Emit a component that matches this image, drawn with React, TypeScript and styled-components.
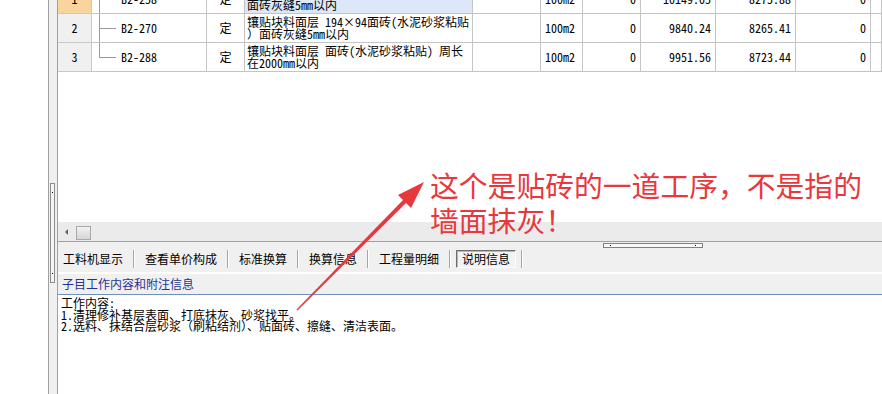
import React from "react";
import styled, { createGlobalStyle } from "styled-components";

const Global = createGlobalStyle`
  html, body { margin: 0; padding: 0; background: #fff; }
  body {
    font-family: "Noto Sans Mono CJK SC", "Noto Sans CJK SC", "Liberation Mono", monospace;
    font-size: 12px;
    color: #000;
  }
`;

const Screen = styled.div`
  position: relative;
  width: 882px;
  height: 394px;
  overflow: hidden;
  display: flex;
  background: #fff;
`;

const Gutter = styled.div`
  width: 48px;
  flex: none;
  background: #fff;
`;

const SideSplitter = styled.div`
  width: 10px;
  flex: none;
  box-sizing: border-box;
  border-left: 1px solid #a0a0a0;
  border-right: 1px solid #a0a0a0;
  background: #f0f0f0;
  padding: 183px 0 0 1px;
`;

const SideGrip = styled.div`
  width: 5px;
  height: 100px;
  box-sizing: border-box;
  border: 1px solid #8c8c8c;
  background: #f6f6f6;
  display: flex;
  flex-direction: column;
  justify-content: space-between;
  align-items: center;
  padding: 8px 0;
`;

const Dot = styled.span`
  width: 1px;
  height: 1px;
  background: #000;
`;

const Main = styled.div`
  flex: 1;
  min-width: 0;
  display: flex;
  flex-direction: column;
`;

const TableArea = styled.div`
  height: 222px;
  flex: none;
  overflow: hidden;
  background: #fff;
`;

const Rows = styled.div`
  margin-top: -15px;
`;

const Row = styled.div`
  display: grid;
  grid-template-columns: 34px 115px 38px 228px 68px 42px 58px 75px 80px 75px 1fr;
  height: 29px;
`;

const Cell = styled.div<{ $align?: "left" | "center" | "right"; $bg?: string }>`
  box-sizing: border-box;
  border-right: 1px solid #c4c4c4;
  border-bottom: 1px solid #c4c4c4;
  display: flex;
  align-items: center;
  justify-content: ${(p) =>
    p.$align === "right" ? "flex-end" : p.$align === "center" ? "center" : "flex-start"};
  padding: 0 4px;
  background: ${(p) => p.$bg ?? "transparent"};
  white-space: nowrap;
  overflow: hidden;
  line-height: 12px;
`;

const NumCell = styled(Cell)<{ $active?: boolean }>`
  background: ${(p) => (p.$active ? "#f9d59e" : "#f0f0f0")};
  border-color: #c8c8c8;
`;

const CodeCell = styled(Cell)`
  padding: 0 0 0 7px;
  align-items: stretch;
`;

const Tree = styled.span<{ $last?: boolean }>`
  width: 17px;
  flex: none;
  margin-bottom: -1px;
  background:
    linear-gradient(#9a9a9a, #9a9a9a) no-repeat 0 0 / 1px ${(p) => (p.$last ? "50%" : "100%")},
    linear-gradient(#9a9a9a, #9a9a9a) no-repeat 0 50% / 100% 1px;
`;

const Code = styled.span`
  display: flex;
  align-items: center;
  padding-left: 5px;
`;

const NameCell = styled(Cell)`
  padding: 0 0 0 2px;
  flex-direction: column;
  align-items: flex-start;
  justify-content: center;
  line-height: 12px;
`;

const HScroll = styled.div`
  height: 20px;
  flex: none;
  box-sizing: border-box;
  background: #ebebeb;
  border-bottom: 1px solid #a0a0a0;
  display: flex;
  align-items: center;
  padding: 0 0 0 7px;
  gap: 8px;
`;

const ArrowLeft = styled.span`
  width: 0;
  height: 0;
  border-top: 3px solid transparent;
  border-bottom: 3px solid transparent;
  border-right: 3px solid #606060;
`;

const Thumb = styled.span`
  width: 15px;
  height: 14px;
  margin-top: 3px;
  box-sizing: border-box;
  border: 1px solid #a8a8a8;
  background: linear-gradient(#f2f2f2, #d6d6d6);
`;

const GripRow = styled.div`
  height: 7px;
  flex: none;
  background: #f0f0f0;
  padding: 1px 0 0 545px;
  box-sizing: border-box;
`;

const HGrip = styled.div`
  width: 100px;
  height: 5px;
  box-sizing: border-box;
  border: 1px solid #808080;
  background: #f8f8f8;
  display: flex;
  justify-content: space-between;
  align-items: center;
  padding: 0 6px;
`;

const TabBar = styled.div`
  height: 25px;
  flex: none;
  box-sizing: border-box;
  background: #f0f0f0;
  border-bottom: 2px solid #fff;
  display: flex;
  align-items: flex-start;
  padding: 1px 0 0 0;
  font-family: "Noto Sans CJK SC", sans-serif;
`;

const Tab = styled.div<{ $first?: boolean }>`
  height: 18px;
  line-height: 18px;
  padding: 0 10px 0 ${(p) => (p.$first ? "5px" : "10px")};
  color: #000;
`;

const ActiveTab = styled.div`
  height: 18px;
  line-height: 16px;
  margin: 0 5px;
  padding: 0 5px;
  box-sizing: border-box;
  border: 1px solid;
  border-color: #6e6e6e #fff #fff #6e6e6e;
  box-shadow: inset 1px 1px 0 #b8b8b8;
  background: #f3f3f3;
`;

const Sep = styled.span`
  width: 1px;
  height: 18px;
  background: #a6a6a6;
  border-right: 1px solid #fff;
`;

const Header = styled.div`
  height: 21px;
  flex: none;
  box-sizing: border-box;
  background: #f0f0f0;
  border-bottom: 1px solid #6f8fbd;
  padding-left: 4px;
  line-height: 20px;
  color: #1f3494;
  font-family: "Noto Sans CJK SC", sans-serif;
`;

const Memo = styled.div`
  flex: 1;
  background: #fff;
  padding: 2px 3px;
  line-height: 11.5px;
  white-space: pre;
`;

const Note = styled.div`
  position: absolute;
  left: 430px;
  top: 167px;
  font-family: "Noto Sans CJK SC", sans-serif;
  font-size: 28.8px;
  line-height: 35px;
  color: #e8383e;
  white-space: nowrap;
`;

const Overlay = styled.svg`
  position: absolute;
  left: 0;
  top: 0;
  pointer-events: none;
`;

type RowData = {
  n: string;
  code: string;
  name: [string, string];
  unit: string;
  q: string;
  p1: string;
  p2: string;
  z: string;
  active?: boolean;
  last?: boolean;
};

const rows: RowData[] = [
  {
    n: "1",
    code: "B2-258",
    name: ["镶贴块料面层 240×60面砖(水泥砂浆粘贴)", " 面砖灰缝5mm以内"],
    unit: "100m2",
    q: "0",
    p1: "10149.05",
    p2: "8275.88",
    z: "0",
    active: true,
  },
  {
    n: "2",
    code: "B2-270",
    name: ["镶贴块料面层 194×94面砖(水泥砂浆粘贴", "）面砖灰缝5mm以内"],
    unit: "100m2",
    q: "0",
    p1: "9840.24",
    p2: "8265.41",
    z: "0",
  },
  {
    n: "3",
    code: "B2-288",
    name: ["镶贴块料面层 面砖(水泥砂浆粘贴) 周长", "在2000mm以内"],
    unit: "100m2",
    q: "0",
    p1: "9951.56",
    p2: "8723.44",
    z: "0",
    last: true,
  },
];

const tabs = ["工料机显示", "查看单价构成", "标准换算", "换算信息", "工程量明细"];

export default function App() {
  return (
    <>
      <Global />
      <Screen>
        <Gutter />
        <SideSplitter>
          <SideGrip>
            <Dot />
            <Dot />
          </SideGrip>
        </SideSplitter>
        <Main>
          <TableArea>
            <Rows>
              {rows.map((r) => (
                <Row key={r.n}>
                  <NumCell $align="center" $active={r.active}>
                    {r.n}
                  </NumCell>
                  <CodeCell>
                    <Tree $last={r.last} />
                    <Code>{r.code}</Code>
                  </CodeCell>
                  <Cell $align="center">定</Cell>
                  <NameCell $bg={r.active ? "#dce8f7" : undefined}>
                    <span>{r.name[0]}</span>
                    <span>{r.name[1]}</span>
                  </NameCell>
                  <Cell />
                  <Cell $align="left">{r.unit}</Cell>
                  <Cell $align="right">{r.q}</Cell>
                  <Cell $align="right">{r.p1}</Cell>
                  <Cell $align="right">{r.p2}</Cell>
                  <Cell $align="right">{r.z}</Cell>
                  <Cell />
                </Row>
              ))}
            </Rows>
          </TableArea>
          <HScroll>
            <ArrowLeft />
            <Thumb />
          </HScroll>
          <GripRow>
            <HGrip>
              <Dot />
              <Dot />
            </HGrip>
          </GripRow>
          <TabBar>
            {tabs.map((t, i) => (
              <React.Fragment key={t}>
                <Tab $first={i === 0}>{t}</Tab>
                <Sep />
              </React.Fragment>
            ))}
            <ActiveTab>说明信息</ActiveTab>
            <Sep />
          </TabBar>
          <Header>子目工作内容和附注信息</Header>
          <Memo>
            {"工作内容:\n1.清理修补基层表面、打底抹灰、砂浆找平。\n2.选料、抹结合层砂浆（刷粘结剂）、贴面砖、擦缝、清洁表面。"}
          </Memo>
        </Main>
        <Note>
          这个是贴砖的一道工序，不是指的
          <br />
          墙面抹灰！
        </Note>
        <Overlay width="882" height="394" viewBox="0 0 882 394">
          <polygon points="296.5,309.5 297.5,310.5 411.6,197.6 408.4,194.4" fill="#e8383e" />
          <polygon points="424,182 398,195 411,208" fill="#e8383e" />
        </Overlay>
      </Screen>
    </>
  );
}
